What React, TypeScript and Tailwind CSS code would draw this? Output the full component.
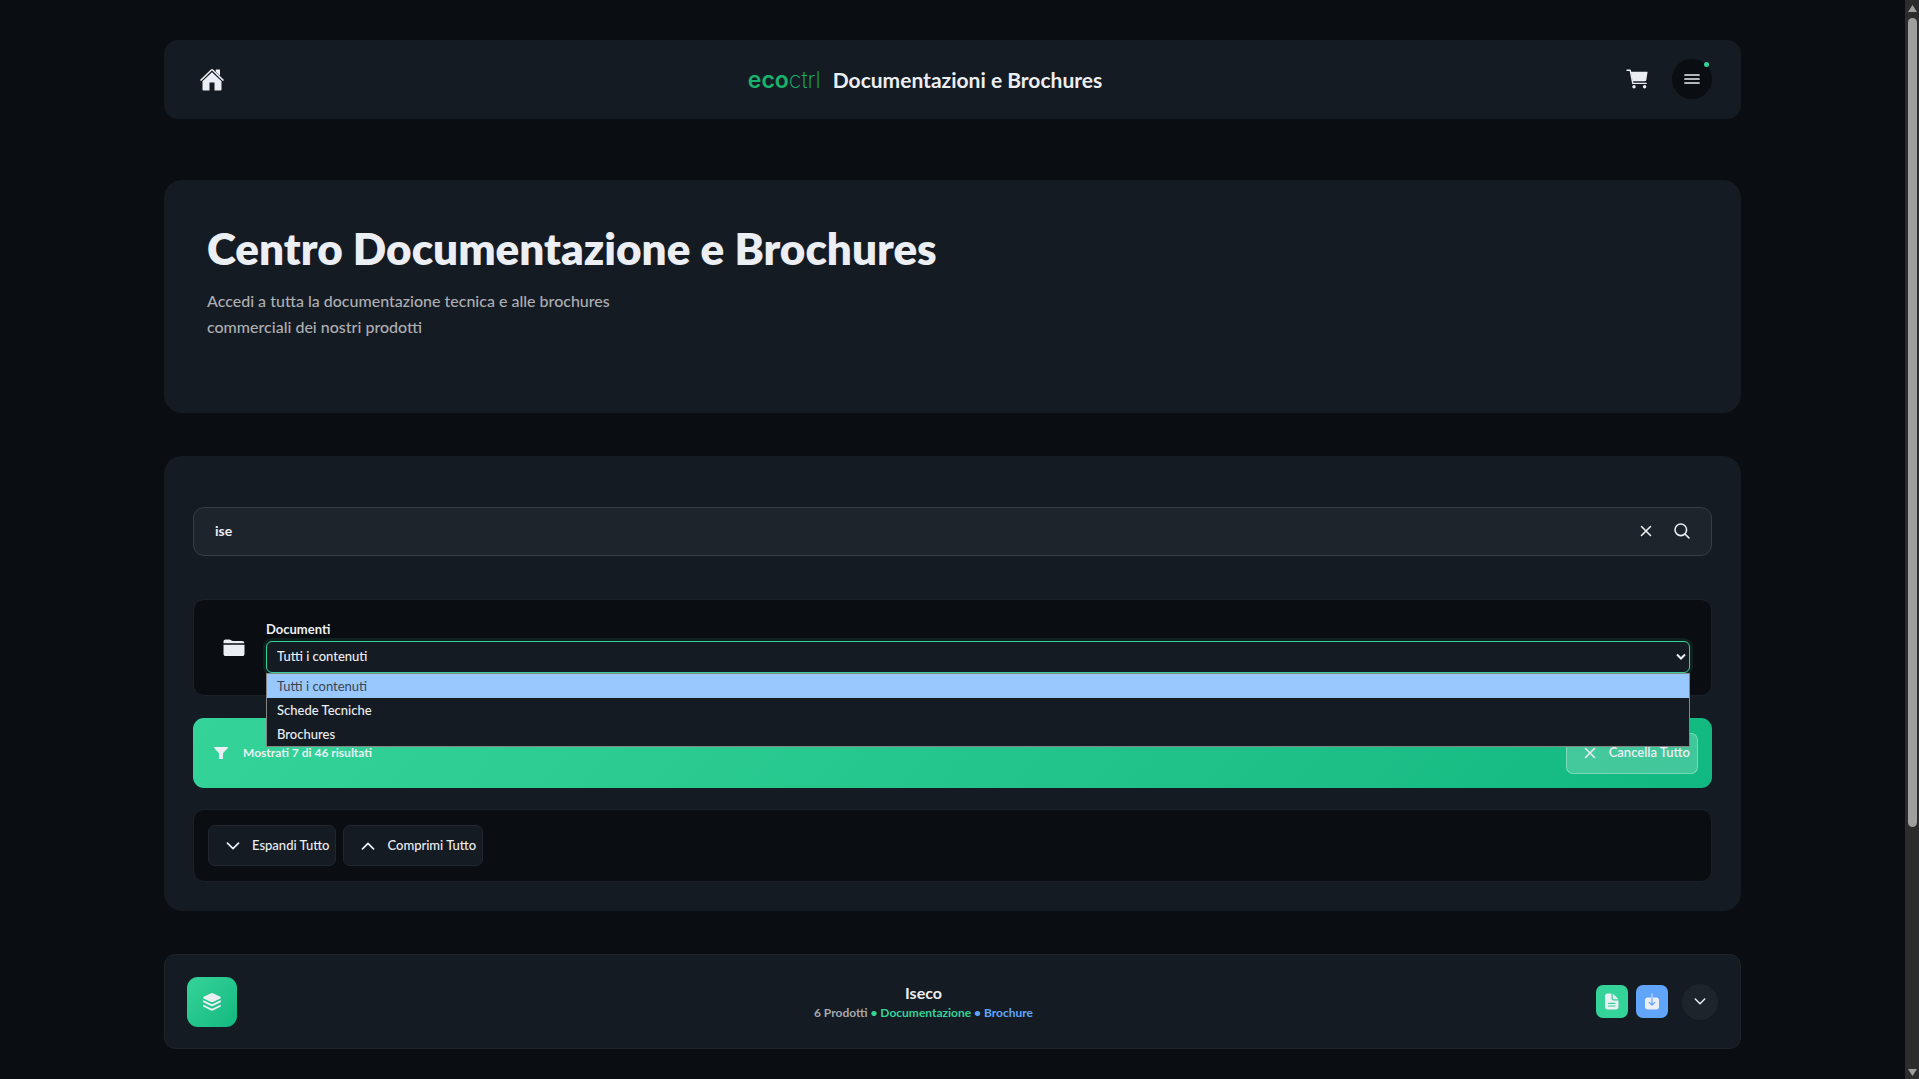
import React, { useState } from 'react';

type IconProps = { className?: string };

function HomeIcon({ className }: IconProps) {
  return (
    <svg viewBox="0 0 24 24" className={className} fill="none" aria-hidden="true">
      <path d="M1 12.100 11.100 2.300a1.300 1.300 0 0 1 1.800 0L23 12.100" stroke="currentColor" strokeWidth="1.500" strokeLinecap="round" strokeLinejoin="round" />
      <path d="M15.800 1.500h4.200v6.300l-4.200-4z" fill="currentColor" />
      <path d="M12 4.200 21.500 13.200V21.500a1 1 0 0 1-1 1h-6v-8h-5v8h-6a1 1 0 0 1-1-1v-8.300z" fill="currentColor" />
    </svg>
  );
}

function CartIcon({ className }: IconProps) {
  return (
    <svg viewBox="0 0 22 20" className={className} fill="none" aria-hidden="true">
      <path d="M1 1.3h3.2l2.6 13.1h13.4" stroke="currentColor" strokeWidth="1.4" strokeLinecap="round" strokeLinejoin="round" />
      <path d="M4.800 2.700h16.800l-1.300 8.400a1.400 1.400 0 0 1-1.400 1.100H6.700z" fill="currentColor" />
      <circle cx="8" cy="17.800" r="1.700" fill="currentColor" />
      <circle cx="18.600" cy="17.800" r="1.700" fill="currentColor" />
    </svg>
  );
}

function MenuIcon({ className }: IconProps) {
  return (
    <svg viewBox="0 0 16 12" className={className} stroke="currentColor" strokeWidth="1.7" strokeLinecap="round" aria-hidden="true">
      <path d="M1 2h14M1 6h14M1 10h14" />
    </svg>
  );
}

function CrossIcon({ className }: IconProps) {
  return (
    <svg viewBox="0 0 12 12" className={className} stroke="currentColor" strokeWidth="1.6" strokeLinecap="round" aria-hidden="true">
      <path d="m1.5 1.5 9 9m0-9-9 9" />
    </svg>
  );
}

function SearchIcon({ className }: IconProps) {
  return (
    <svg viewBox="0 0 16 16" className={className} fill="none" stroke="currentColor" strokeWidth="1.6" strokeLinecap="round" aria-hidden="true">
      <circle cx="6.8" cy="6.8" r="5.8" />
      <path d="m11 11 3.9 3.9" />
    </svg>
  );
}

function FolderIcon({ className }: IconProps) {
  return (
    <svg viewBox="0 0 22 18" className={className} fill="currentColor" aria-hidden="true">
      <path d="M.5 4.3V2.7C.5 1.3 1.300.5 2.700.5h3.500c.8 0 1.200.2 1.700.6l.6.5c.4.3.7.4 1.200.4h9.300c1.400 0 2.300.8 2.300 2.100v.2z" />
      <path d="M.5 5.700h21v9c0 1.500-.8 2.300-2.300 2.300H2.800C1.300 17 .5 16.200.5 14.700z" />
    </svg>
  );
}

function FilterIcon({ className }: IconProps) {
  return (
    <svg viewBox="0 0 14 12" className={className} fill="currentColor" aria-hidden="true">
      <path d="M.6 0h12.800c.6 0 .8.700.4 1.100L9 6.300V11.500a.5.5 0 0 1-.5.5h-3a.5.500 0 0 1-.5-.5V6.300L.2 1.100C-.2.700 0 0 .6 0z" />
    </svg>
  );
}

function ChevronIcon({ className }: IconProps) {
  return (
    <svg viewBox="0 0 14 8" className={className} fill="none" stroke="currentColor" strokeWidth="1.7" strokeLinecap="round" strokeLinejoin="round" aria-hidden="true">
      <path d="m1.500 1.200L7 6.600l5.500-5.400" />
    </svg>
  );
}

function LayersIcon({ className }: IconProps) {
  return (
    <svg viewBox="0 0 18 18" className={className} fill="currentColor" aria-hidden="true">
      <path d="M8 .3a2.500 2.500 0 0 1 2 0l7.300 3.500c.8.400.8 1.200 0 1.600L10 8.900a2.500 2.500 0 0 1-2 0L.7 5.400c-.8-.4-.8-1.200 0-1.600z" />
      <path d="M.6 7.300 7.700 10.800c.9.400 1.700.4 2.600 0l7.100-3.500c.8.700.8 1.700-.1 2.100L10 13a2.500 2.500 0 0 1-2 0L.7 9.400C-.2 9-.2 8 .6 7.300z" />
      <path d="M.6 11.700l7.100 3.500c.9.400 1.700.4 2.600 0l7.100-3.500c.8.700.8 1.700-.1 2.100L10 17.400a2.500 2.500 0 0 1-2 0L.7 13.800c-.9-.4-.9-1.400-.1-2.100z" />
    </svg>
  );
}

function DocumentIcon({ className }: IconProps) {
  return (
    <svg viewBox="0 0 14 17" className={className} aria-hidden="true">
      <path d="M2.500.500h4v5c0 1.300.7 2 2 2h5v6.500c0 1.600-.9 2.500-2.500 2.500H2.500C.9 16.500 0 15.600 0 14V3C0 1.400.9.500 2.500.500z" fill="currentColor" />
      <path d="M7.800.8c.4.100.7.300 1 .6l3.800 3.900c.3.300.5.600.6 1H8.700c-.6 0-.9-.3-.9-.9z" fill="currentColor" />
      <path d="M3.500 10.300h6.500M3.500 13h6.500" stroke="#34d399" strokeWidth="1.200" strokeLinecap="round" />
    </svg>
  );
}

function DownloadIcon({ className }: IconProps) {
  return (
    <svg viewBox="0 0 14 17" className={className} fill="none" strokeLinecap="round" strokeLinejoin="round" aria-hidden="true">
      <path d="M2.700 4.500h8.600C13 4.500 14 5.500 14 7.200v6.600c0 1.700-1 2.700-2.700 2.700H2.700C1 16.500 0 15.500 0 13.800V7.200c0-1.700 1-2.700 2.700-2.700z" fill="currentColor" />
      <path d="M7 4.500v7M4.300 9.500 7 12.100l2.700-2.600" stroke="#60a5fa" strokeWidth="1.200" />
      <path d="M7 .8v4" stroke="currentColor" strokeOpacity=".7" strokeWidth="1.200" />
    </svg>
  );
}

const options = ['Tutti i contenuti', 'Schede Tecniche', 'Brochures'];

function Header() {
  return (
    <header className="flex h-[79px] items-center justify-between rounded-[14px] bg-[#151b23] pr-[29px] pl-[36px]">
      <a href="#home" aria-label="Home">
        <HomeIcon className="size-6" />
      </a>
      <div className="flex items-center gap-3">
        <span className="font-['Inter',sans-serif] text-[23px] leading-7 text-[#19b26b]">
          <span className="font-semibold">eco</span>
          <span className="font-extralight">ctrl</span>
        </span>
        <span className="text-[21px] leading-7 font-bold">Documentazioni e Brochures</span>
      </div>
      <div className="flex items-center gap-6 pb-px">
        <button type="button" aria-label="Carrello">
          <CartIcon className="h-5 w-[22px]" />
        </button>
        <button type="button" aria-label="Menu" className="relative flex size-10 items-center justify-center rounded-full bg-[#0a0d11]">
          <MenuIcon className="h-3 w-4" />
          <span className="absolute top-[3px] right-[3px] size-[5px] rounded-full bg-[#34d399]" />
        </button>
      </div>
    </header>
  );
}

function Hero() {
  return (
    <section className="mt-[61px] h-[233px] rounded-[18px] bg-[#151b23] px-[43px] pt-[42px]">
      <h1 className="text-[44px] leading-[52px] font-extrabold">Centro Documentazione e Brochures</h1>
      <p className="mt-[14px] max-w-[430px] text-base leading-[26px] font-medium text-[#acaeb2]">
        Accedi a tutta la documentazione tecnica e alle brochures commerciali dei nostri prodotti
      </p>
    </section>
  );
}

function DocumentFilter() {
  const [value, setValue] = useState(options[0]);
  return (
    <div className="mt-[43px] flex h-[97px] items-center rounded-[11px] border border-[#1b2028] bg-[#0a0d11] pr-[21px] pl-[29px]">
      <FolderIcon className="h-[18px] w-[22px]" />
      <div className="ml-[21px] flex flex-1 flex-col gap-[2px] pb-[3px]">
        <label htmlFor="content-type" className="text-[13px] leading-5 font-bold">
          Documenti
        </label>
        <div className="relative">
          <select
            id="content-type"
            value={value}
            onChange={(e) => setValue(e.target.value)}
            className="block h-8 w-full appearance-none rounded-md border border-[#34d399] bg-[#151b23] px-[10px] text-[13px] font-medium shadow-[0_0_0_3px_rgba(52,211,153,0.1)] outline-none"
          >
            {options.map((option) => (
              <option key={option}>{option}</option>
            ))}
          </select>
          <span className="pointer-events-none absolute top-3 right-1">
            <svg viewBox="0 0 10 8" className="h-2 w-[10px]" fill="none" stroke="currentColor" strokeWidth="2" aria-hidden="true">
              <path d="m1 1.500 4 4 4-4" />
            </svg>
          </span>
          <ul role="listbox" aria-label="Documenti" className="absolute top-8 right-0 left-0 z-10 border border-[#858585] bg-[#151b23] text-[13px] leading-6 font-medium">
            {options.map((option) => (
              <li
                key={option}
                role="option"
                aria-selected={option === value}
                onClick={() => setValue(option)}
                className="px-[10px] aria-selected:bg-[#99c8ff] aria-selected:font-normal aria-selected:text-[#3c444e]"
              >
                {option}
              </li>
            ))}
          </ul>
        </div>
      </div>
    </div>
  );
}

function SearchPanel() {
  const [query, setQuery] = useState('ise');
  return (
    <section className="mt-[43px] rounded-[18px] bg-[#151b23] px-[29px] pt-[51px] pb-[29px]">
      <div className="flex h-[49px] items-center rounded-[11px] border border-[#373c47] bg-[#1e242b] px-[21px] pb-[2px]">
        <input
          type="text"
          aria-label="Cerca"
          value={query}
          onChange={(e) => setQuery(e.target.value)}
          className="min-w-0 flex-1 bg-transparent text-sm font-bold outline-none"
        />
        <button type="button" aria-label="Cancella ricerca" className="mr-[22px]" onClick={() => setQuery('')}>
          <CrossIcon className="size-3" />
        </button>
        <button type="button" aria-label="Cerca">
          <SearchIcon className="size-4" />
        </button>
      </div>

      <DocumentFilter />

      <div className="mt-[22px] flex h-[70px] items-center justify-between rounded-[11px] bg-linear-135 from-[#34d399] to-[#10b981] pr-[14px] pl-[21px]">
        <div className="flex items-center gap-[15px]">
          <FilterIcon className="h-3 w-[14px]" />
          <span className="text-[12px] font-bold">Mostrati 7 di 46 risultati</span>
        </div>
        <button type="button" className="flex h-[41px] items-center gap-[13px] rounded-[7px] border border-white/30 bg-white/20 pr-[7px] pl-[17px] text-[13px] font-semibold">
          <CrossIcon className="size-3" />
          Cancella Tutto
        </button>
      </div>

      <div className="mt-[21px] flex h-[73px] items-center gap-[7px] rounded-[11px] border border-[#1b2028] bg-[#0a0d11] px-[14px]">
        <button type="button" className="flex h-[41px] items-center gap-3 rounded-[7px] border border-[#22272f] bg-[#151b23] pr-[6px] pl-[17px] text-[13px] font-medium">
          <ChevronIcon className="h-2 w-[14px]" />
          Espandi Tutto
        </button>
        <button type="button" className="flex h-[41px] items-center gap-3 rounded-[7px] border border-[#22272f] bg-[#151b23] pr-[6px] pl-[17px] text-[13px] font-medium">
          <ChevronIcon className="h-2 w-[14px] rotate-180" />
          Comprimi Tutto
        </button>
      </div>
    </section>
  );
}

function BrandCard() {
  return (
    <article className="mt-[43px] flex h-[95px] items-center rounded-[11px] border border-[#1d232a] bg-[#151b23] px-[22px]">
      <div className="flex size-[50px] items-center justify-center rounded-[11px] bg-linear-135 from-[#34d399] to-[#10b981]">
        <LayersIcon className="size-[18px]" />
      </div>
      <div className="ml-[14px] flex-1 pt-[2px] text-center">
        <h2 className="text-base leading-5 font-bold">Iseco</h2>
        <p className="text-[12px] leading-5 font-bold text-[#a5a7ab]">
          6 Prodotti <span className="text-[#34d399]">• Documentazione</span> <span className="text-[#60a5fa]">• Brochure</span>
        </p>
      </div>
      <a href="#documentazione" aria-label="Documentazione" className="flex h-[33px] w-8 items-center justify-center rounded-[7px] bg-[#34d399]">
        <DocumentIcon className="h-[17px] w-[14px]" />
      </a>
      <a href="#brochure" aria-label="Brochure" className="ml-2 flex h-[33px] w-8 items-center justify-center rounded-[7px] bg-[#60a5fa]">
        <DownloadIcon className="h-[17px] w-[14px]" />
      </a>
      <button type="button" aria-label="Espandi Iseco" className="ml-[14px] flex size-9 items-center justify-center rounded-full bg-[#1e242b]">
        <ChevronIcon className="h-[7px] w-3" />
      </button>
    </article>
  );
}

function Scrollbar() {
  return (
    <div aria-hidden="true" className="fixed inset-y-0 right-0 flex w-[14px] flex-col items-center bg-[#2c2c2c]">
      <svg viewBox="0 0 9 7" className="mt-[5px] h-[7px] w-[9px]" fill="#9f9f9f">
        <path d="M4.500 0 9 7H0z" />
      </svg>
      <div className="mt-[6px] h-[809px] w-[9px] rounded-full bg-[#9f9f9f]" />
      <svg viewBox="0 0 9 7" className="mt-auto mb-[3px] h-[7px] w-[9px]" fill="#9f9f9f">
        <path d="M0 0h9L4.500 7z" />
      </svg>
    </div>
  );
}

export default function App() {
  return (
    <div className="min-h-screen bg-[#0a0d11] pr-[14px] font-['Lato',sans-serif] text-[#ebeef2]">
      <main className="px-[164px] pt-10 pb-[30px]">
        <Header />
        <Hero />
        <SearchPanel />
        <BrandCard />
      </main>
      <Scrollbar />
    </div>
  );
}
